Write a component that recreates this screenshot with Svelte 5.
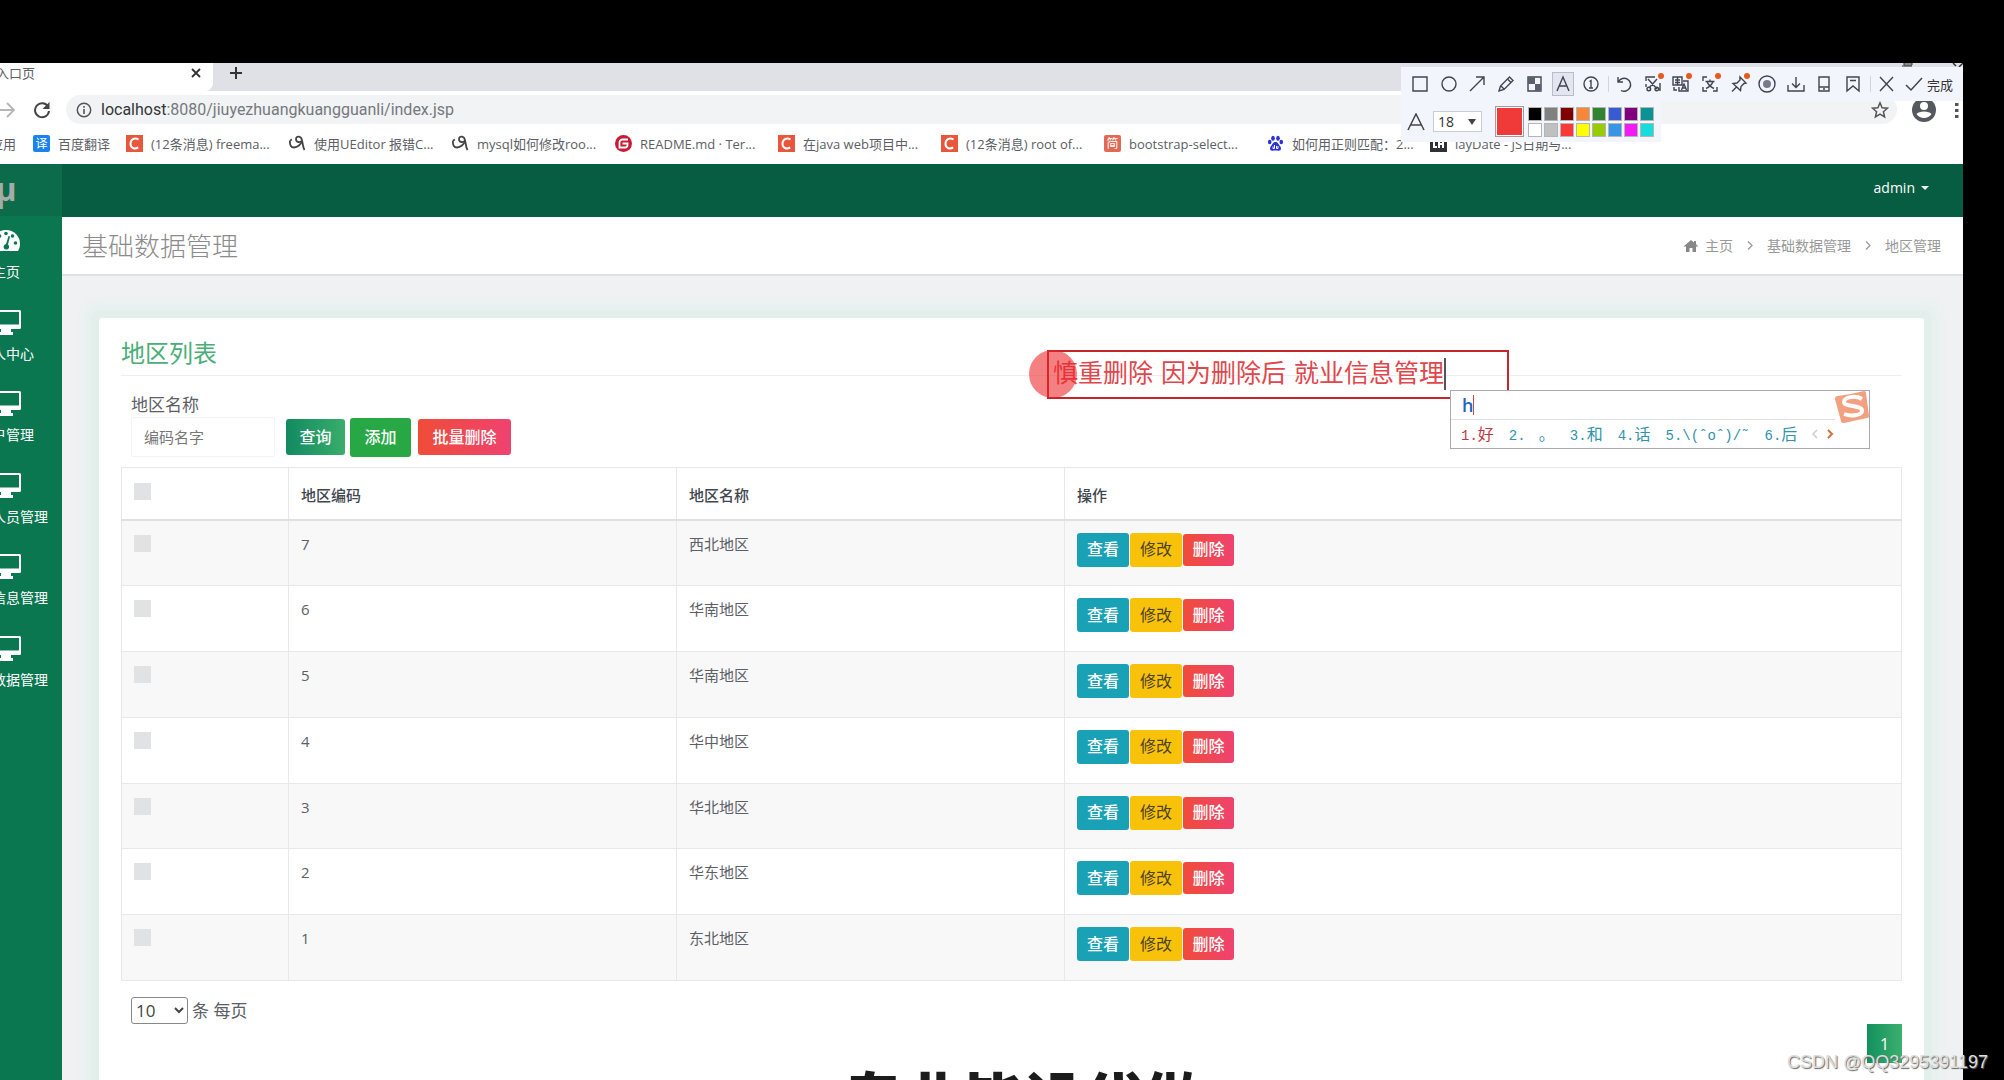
<script>
  const bookmarks = [
    { kind: 'c', label: '(12条消息) freema...' },
    { kind: 'swirl', label: '使用UEditor 报错C...' },
    { kind: 'swirl', label: 'mysql如何修改roo...' },
    { kind: 'g', label: 'README.md · Ter...' },
    { kind: 'c', label: '在java web项目中...' },
    { kind: 'c', label: '(12条消息) root of...' },
    { kind: 'jian', label: 'bootstrap-select...' },
    { kind: 'paw', label: '如何用正则匹配：2...' },
    { kind: 'lay', label: 'layDate - JS日期与...' }
  ];
  const menu = ['个人中心', '用户管理', '企业人员管理', '就业信息管理', '基础数据管理'];
  const rows = [
    [7, '西北地区'],
    [6, '华南地区'],
    [5, '华南地区'],
    [4, '华中地区'],
    [3, '华北地区'],
    [2, '华东地区'],
    [1, '东北地区']
  ];
  const drawTools = [
    { name: '矩形', d: 'M4 4h14v14H4z' },
    { name: '椭圆', d: 'M11 4a7 7 0 1 0 0 14a7 7 0 1 0 0-14z' },
    { name: '箭头', d: 'M4 18L18 4M10 4h8v8' },
    { name: '画笔', d: 'M4 18l1.5-5L14.500 4l3.500 3.500L9 16.500zM12.500 6l3.500 3.500M6 13l3 3' },
    { name: '马赛克', d: 'M5 4h13v14H5z', fill: 'M5 4h7v7H5zM12 11h6v7h-6z' },
    { name: '文字', d: 'M5 18L11 4l6 14M7 13h8', on: true },
    { name: '序号', d: 'M11 4a7 7 0 1 0 0 14a7 7 0 1 0 0-14zM9.500 8.500L11 7.500V15M9 15h4' }
  ];
  const actions = [
    { name: '撤销', d: 'M5 4v5h5M5.500 8.500A6.500 6.500 0 1 1 8 17.500' },
    { name: '裁剪', d: 'M4 8V4h9M18 10v8M4 14v-3M6 6l9 10M15 6L7 15M5 16a1.800 1.800 0 1 0 3.600 0a1.800 1.800 0 1 0-3.600 0M13 16a1.800 1.800 0 1 0 3.600 0a1.800 1.800 0 1 0-3.600 0', dot: true },
    { name: '翻译', d: 'M3 4h9v8H3zM5 7h5M5 9.500h5M7.500 4v8M13 8h5v10H9v-4M11.500 17l2.500-6 2.500 6M12.500 15h3M4 14v3h3', dot: true },
    { name: '文字识别', d: 'M4 8V4h4M4 14v4h4M14 18h4v-4M6.500 8.500h9M11 6.500v2M14 8.500c-1 3-3.500 5.500-7 7M8 8.500c1 3 3.500 5.500 7 7', dot: true },
    { name: '贴图', d: 'M12 4l6 6-2 .5-3 3-.5 4L5 10.500l4-.5 3-3zM9 13.500L4 18.500', dot: true },
    { name: '录制', d: 'M11 3a8 8 0 1 0 0 16a8 8 0 1 0 0-16z', fill: 'M11 7a4 4 0 1 0 0 8a4 4 0 1 0 0-8z' },
    { name: '保存', d: 'M11 4v10M7 10.500l4 4 4-4M3 12v6h16v-6' },
    { name: '手机', d: 'M6 4h10v14H6zM6 14h10M10 16h2' },
    { name: '收藏', d: 'M5 4h12v14l-6-5-6 5zM8 7.500h6' }
  ];
  const palette = [
    ['#000', '#808080', '#800000', '#f7883a', '#308430', '#385ad3', '#800080', '#099394'],
    ['#fff', '#c0c0c0', '#fb3838', '#ff0', '#99cc00', '#3894e4', '#f31bf3', '#16dcdc']
  ];
</script>

<div class="stage">
  <div class="browser">
    <header class="chrome">
      <div class="tabs">
        <div class="tab">
          <span>入口页</span>
          <button class="bare" aria-label="关闭标签页"><svg width="12" height="12" viewBox="0 0 12 12"><path d="M2 2l8 8M10 2l-8 8" stroke="#333" stroke-width="1.800" /></svg></button>
        </div>
        <button class="bare plus" aria-label="新标签页"><svg width="14" height="14" viewBox="0 0 14 14"><path d="M7 1v12M1 7h12" stroke="#333" stroke-width="2" /></svg></button>
        <div class="window-marks">
          <svg width="62" height="5" viewBox="0 0 62 5"><path d="M3 0h8v2H3zM1 3h10" stroke="#333" fill="none" /><path d="M52 0l3 3M62 0l-4 4" stroke="#333" stroke-width="1.500" /></svg>
        </div>
      </div>
      <div class="toolbar">
        <svg class="fwd" width="18" height="18" viewBox="0 0 18 18"><path d="M0 9h16M9 2l7 7-7 7" fill="none" stroke="#b4b6b9" stroke-width="1.800" /></svg>
        <button class="bare reload" aria-label="重新加载"><svg width="18" height="18" viewBox="0 0 18 18"><path d="M15 5.500A7 7 0 1 0 16 10" fill="none" stroke="#444" stroke-width="2" /><path d="M16.500 1v7h-7z" fill="#444" /></svg></button>
        <div class="omnibox">
          <svg width="16" height="16" viewBox="0 0 16 16"><circle cx="8" cy="8" r="6.700" fill="none" stroke="#555" stroke-width="1.500" /><path d="M8 7v5M8 4v1.800" stroke="#555" stroke-width="1.600" /></svg>
          <div class="url"><b>localhost</b>:8080/jiuyezhuangkuangguanli/index.jsp</div>
          <svg width="18" height="18" viewBox="0 0 18 18"><path d="M9 1.800l2.100 4.900 5.300.5-4 3.500 1.200 5.200L9 13.200l-4.600 2.700 1.200-5.200-4-3.500 5.300-.5z" fill="none" stroke="#555" stroke-width="1.500" /></svg>
        </div>
        <svg class="avatar" width="24" height="24" viewBox="0 0 24 24"><circle cx="12" cy="12" r="12" fill="#55585c" /><circle cx="12" cy="8" r="4" fill="#fff" /><path d="M4.500 16c2-3.500 13-3.500 15 0a9 9 0 0 1-15 0z" fill="#fff" /></svg>
        <svg width="6" height="18" viewBox="0 0 6 18"><path d="M1 2h3.500v3H1zM1 8h3.500v3H1zM1 14h3.500v3H1z" fill="#555" /></svg>
      </div>
      <nav class="bookmarks" aria-label="书签">
        <a class="apps" href="#apps">应用</a>
        <a class="fanyi" href="#fanyi"><span class="ico blue">译</span>百度翻译</a>
        {#each bookmarks as b}
          <a class="mark" href="#bookmark">
            {#if b.kind === 'c'}
              <svg width="17" height="17" viewBox="0 0 17 17"><path d="M0 0h17v17H0z" fill="#e8573b" /><path d="M12.500 4.500C8.500 2 4.500 4.500 4.500 8.800c0 4.200 4 5.700 7.700 3.700" fill="none" stroke="#fff" stroke-width="2" /></svg>
            {:else if b.kind === 'swirl'}
              <svg width="17" height="17" viewBox="0 0 17 17"><path d="M1 5.500c-.5 4.500 1 7 4 7 3.500 0 7-3 8-6.500" fill="none" stroke="#444" stroke-width="1.800" /><path d="M13 6.500C13 .5 7 .5 7 4s4 4 6 1.500c1 3 .5 6 2.500 9.500" fill="none" stroke="#444" stroke-width="1.800" /><path d="M1 5.500l2-1" stroke="#444" stroke-width="1.500" /></svg>
            {:else if b.kind === 'g'}
              <svg width="17" height="17" viewBox="0 0 17 17"><circle cx="8.500" cy="8.500" r="8.500" fill="#c71d33" /><path d="M13 4.500H7.500a3 3 0 0 0-3 3V12.500h5.500a2.500 2.500 0 0 0 2.500-2.500V8.500H7.500" fill="none" stroke="#fff" stroke-width="1.800" /></svg>
            {:else if b.kind === 'jian'}
              <span class="ico red">简</span>
            {:else if b.kind === 'paw'}
              <svg width="17" height="17" viewBox="0 0 17 17" fill="#2a32d8"><ellipse cx="6" cy="3.300" rx="1.800" ry="2.500" /><ellipse cx="11" cy="3.300" rx="1.800" ry="2.500" /><ellipse cx="2.700" cy="7" rx="1.800" ry="2.200" /><ellipse cx="14.300" cy="7" rx="1.800" ry="2.200" /><path d="M8.500 7c2.500 0 3 2.500 4.500 4s1.500 5-1.500 4.700c-2-.3-4-.3-6 0C2.500 16 2.500 12.500 4 11s2-4 4.500-4z" /><path d="M7.500 10v3.500H6v-2M9.500 11v2.500H11V11" fill="none" stroke="#fff" /></svg>
            {:else}
              <svg width="17" height="17" viewBox="0 0 17 17"><path d="M0 0h17v17H0z" fill="#2e3238" /><path d="M4 3v9h3M9 6v7M13 6v7M9 9h4" fill="none" stroke="#fff" stroke-width="2" /></svg>
            {/if}
            <span>{b.label}</span>
          </a>
        {/each}
      </nav>
    </header>

    <div class="app">
      <aside class="side">
        <div class="logo">µ</div>
        <nav class="menu" aria-label="主菜单">
          <a href="#home">
            <svg width="30" height="26" viewBox="0 0 30 26"><path d="M1 17a14 14 0 0 1 28 0c0 3-1 5-2 7H3c-1-2-2-4-2-7z" fill="#fff" /><g fill="#0b7750"><circle cx="5.500" cy="16" r="1.800" /><circle cx="8.500" cy="9" r="1.800" /><circle cx="15" cy="6.500" r="1.800" /><circle cx="21.500" cy="9" r="1.800" /><circle cx="24.500" cy="16" r="1.800" /><path d="M17.500 9l1.500.5-2 8a2.800 2.800 0 1 1-2-.5z" /></g></svg>
            主页
          </a>
          {#each menu as m}
            <a href="#menu">
              <svg width="30" height="26" viewBox="0 0 30 26"><path d="M1.500 1h27q1.500 0 1.500 1.500v16q0 1.500-1.500 1.500H20v3h2v3H8v-3h2v-3H1.500Q0 20 0 18.500v-16Q0 1 1.500 1zM2 3v12.500h26V3z" fill="#fff" fill-rule="evenodd" /></svg>
              {m}
            </a>
          {/each}
        </nav>
      </aside>

      <div class="main">
        <div class="navbar"><button class="bare admin">admin<i></i></button></div>
        <div class="heading">
          <h1>基础数据管理</h1>
          <nav class="crumbs" aria-label="面包屑">
            <a href="#home"><svg width="14" height="12" viewBox="0 0 14 12"><path d="M7 0l3 2.600V1h2v3.300L14 6l-.8 1L12 6v6H8.500V8h-3v4H2V6L.8 7 0 6z" fill="#888" /></svg>主页</a>
            <svg width="6" height="9" viewBox="0 0 6 9"><path d="M1 .5l4 4-4 4" fill="none" stroke="#999" stroke-width="1.300" /></svg>
            <a href="#data">基础数据管理</a>
            <svg width="6" height="9" viewBox="0 0 6 9"><path d="M1 .5l4 4-4 4" fill="none" stroke="#999" stroke-width="1.300" /></svg>
            <span>地区管理</span>
          </nav>
        </div>
        <div class="content">
          <section class="card">
            <h2>地区列表</h2>
            <div class="filter">
              <label for="area">地区名称</label>
              <div class="controls">
                <input id="area" type="text" placeholder="编码名字" />
                <button class="btn query">查询</button>
                <button class="btn add">添加</button>
                <button class="btn danger">批量删除</button>
              </div>
            </div>
            <table>
              <thead>
                <tr>
                  <th class="pick"><input type="checkbox" aria-label="全选" /></th>
                  <th class="col">地区编码</th>
                  <th class="col">地区名称</th>
                  <th>操作</th>
                </tr>
              </thead>
              <tbody>
                {#each rows as [code, name]}
                  <tr>
                    <td><input type="checkbox" aria-label={`选择 ${code}`} /></td>
                    <td>{code}</td>
                    <td>{name}</td>
                    <td>
                      <div class="ops">
                        <button class="btn view">查看</button>
                        <button class="btn edit">修改</button>
                        <button class="btn danger">删除</button>
                      </div>
                    </td>
                  </tr>
                {/each}
              </tbody>
            </table>
            <div class="pager-size">
              <select id="size"><option>10</option><option>25</option></select>
              <label for="size">条 每页</label>
            </div>
            <div class="pager"><button class="page">1</button></div>
          </section>
        </div>
      </div>
    </div>
  </div>

  <div class="capture">
    <div class="cap-row">
      <div class="group draw">
        {#each drawTools as t}
          <button class="tool" class:on={t.on} aria-label={t.name}><svg width="22" height="22" viewBox="0 0 22 22"><path d={t.d} fill="none" stroke="#3f4450" stroke-width="1.400" />{#if t.fill}<path d={t.fill} fill="#5b606d" />{/if}</svg></button>
        {/each}
      </div>
      <i class="sep"></i>
      <div class="group act">
        {#each actions as t}
          <button class="tool" aria-label={t.name}><svg width="22" height="22" viewBox="0 0 22 22"><path d={t.d} fill="none" stroke="#3f4450" stroke-width="1.400" />{#if t.fill}<path d={t.fill} fill="#777b88" />{/if}{#if t.dot}<circle cx="19" cy="3" r="3" fill="#e65a1e" />{/if}</svg></button>
        {/each}
      </div>
      <i class="sep"></i>
      <button class="tool end" aria-label="取消"><svg width="22" height="22" viewBox="0 0 22 22"><path d="M5 4l13 14M18 4L5 18" stroke="#3f4450" stroke-width="1.400" /></svg></button>
      <button class="tool done"><svg width="18" height="22" viewBox="0 0 18 22"><path d="M1 12l5 5L17 5" fill="none" stroke="#3f4450" stroke-width="1.500" /></svg>完成</button>
    </div>
    <div class="cap-style">
      <svg width="18" height="18" viewBox="0 0 18 18"><path d="M1 17L9 1l8 16M4 12h10" fill="none" stroke="#444" stroke-width="1.500" /></svg>
      <div class="sizebox">
        <select class="fontsize" aria-label="字号"><option>18</option><option>24</option></select>
        <i></i>
      </div>
      <div class="current"></div>
      <div class="palette">
        {#each palette as line}
          {#each line as c}
            <button aria-label={`颜色 ${c}`} style:background={c}></button>
          {/each}
        {/each}
      </div>
    </div>
  </div>

  <div class="note">慎重删除 因为删除后 就业信息管理<i></i></div>
  <div class="pointer"></div>

  <div class="ime">
    <div class="typed">h<i></i></div>
    <div class="cands">
      <span class="first"><b>1.</b>好</span>
      <span class="wide"><b>2.</b>。</span>
      <span><b>3.</b>和</span>
      <span><b>4.</b>话</span>
      <span><b>5.\(ˆoˆ)/˜</b></span>
      <span><b>6.</b>后</span>
      <svg width="22" height="12" viewBox="0 0 22 12"><path d="M5 2L1 6l4 4" fill="none" stroke="#ccc" stroke-width="1.500" /><path d="M16 2l4 4-4 4" fill="none" stroke="#d8703c" stroke-width="2" /></svg>
    </div>
    <svg class="sogou" width="34" height="32" viewBox="0 0 34 32"><path d="M3 5Q17 3 29 0q2 0 2 2l3 23q0 2-2 2L9 32q-3 0-3-2L0 8q0-3 3-3z" fill="#f2a07f" /><path d="M27 8C20 4 9 6 9 11s17 3 18 8-10 7-18 4" fill="none" stroke="#fff" stroke-width="4" /></svg>
  </div>

  <div class="caption">专业毕设代做</div>
  <div class="watermark">CSDN @QQ3295391197</div>
</div>

<style>
  :global(body) { margin: 0; background: #000; }
  .stage {
    position: relative;
    height: 100vh;
    overflow: hidden;
    box-sizing: border-box;
    padding: 63px 41px 0 0;
    background: #000;
    font-family: "Open Sans", "Noto Sans CJK SC", sans-serif;
    color: #5c6066;
  }
  .stage * { box-sizing: border-box; }
  a { color: inherit; text-decoration: none; }
  svg { flex: none; display: block; }
  button, input, select { font-family: inherit; margin: 0; }
  .bare { border: 0; background: none; padding: 0; display: flex; align-items: center; }
  .browser { height: 100%; display: flex; flex-direction: column; overflow: hidden; background: #fff; }

  .chrome { flex: none; height: 101px; font-size: 13px; overflow: hidden; }
  .tabs { display: flex; height: 28px; background: #dfe1e6; align-items: center; }
  .tab { width: 213px; height: 28px; background: #fff; border-radius: 0 0 8px 0; display: flex; align-items: center; justify-content: space-between; padding: 0 11px 8px 0; line-height: 20px; }
  .tab span { margin-left: -4px; }
  .plus { margin: 0 0 8px 16px; }
  .window-marks { margin-left: auto; align-self: flex-start; }
  .toolbar { display: flex; align-items: center; height: 37px; padding: 0 3px 0 0; }
  .fwd { margin-left: -2px; }
  .reload { margin: 0 15px 0 17px; }
  .omnibox { flex: 1; height: 29px; border-radius: 15px; background: #f1f3f4; display: flex; align-items: center; gap: 9px; padding: 0 8px 0 10px; }
  .url { flex: 1; font-family: Roboto, "Noto Sans CJK SC", sans-serif; font-size: 16px; color: #75797e; line-height: 28px; }
  .url b { font-weight: 400; color: #33363a; }
  .avatar { margin: 0 18px 0 15px; }
  .bookmarks { display: flex; align-items: center; height: 34px; line-height: 20px; white-space: nowrap; padding-bottom: 3px; }
  .apps { margin-left: -10px; width: 43px; }
  .fanyi { width: 93px; display: flex; align-items: center; gap: 8px; }
  .ico { width: 17px; height: 17px; line-height: 17px; font-size: 12px; text-align: center; color: #fff; border-radius: 2px; flex: none; }
  .blue { background: #1b83f0; }
  .red { background: #e06a55; }
  .mark { width: 163px; flex: none; display: flex; align-items: center; gap: 8px; }

  .app { flex: 1; min-height: 0; display: flex; }
  .side { flex: none; width: 112px; margin-left: -50px; background: #0b7750; color: #fff; }
  .logo { height: 52px; background: #0b6b4a; text-align: center; font-size: 32px; line-height: 50px; font-weight: 700; color: #a3aca6; }
  .menu { height: 491px; display: grid; grid-auto-rows: 1fr; padding-top: 2px; font-size: 14px; line-height: 20px; }
  .menu a { display: flex; flex-direction: column; align-items: center; gap: 9px; padding-top: 9px; white-space: nowrap; }

  .main { flex: 1; min-width: 0; display: flex; flex-direction: column; }
  .navbar { flex: none; height: 53px; background: #065d41; display: flex; justify-content: flex-end; padding: 0 34px 6px 0; }
  .admin { color: #fff; font-size: 14px; gap: 6px; }
  .admin i { border: 4px solid transparent; border-top-color: #fff; border-bottom: 0; }
  .heading { flex: none; height: 59px; background: #fff; border-bottom: 2px solid #dfe2e5; display: flex; align-items: center; justify-content: space-between; padding: 0 22px 0 20px; }
  h1 { margin: 0; font-size: 26px; font-weight: 300; color: #8c8c8c; line-height: 36px; }
  .crumbs { display: flex; align-items: center; gap: 14px; font-size: 14px; color: #999; line-height: 20px; }
  .crumbs a { display: flex; align-items: center; gap: 7px; }
  .content { flex: 1; min-height: 0; background: #eff1f3; padding: 42px 39px 0 37px; }
  .card { background: #fff; min-height: 100%; border-radius: 3px; box-shadow: 0 0 0 8px #e2efeb, 0 0 8px 14px #e6f1ee; padding: 15px 22px 60px; }
  h2 { margin: 0; height: 43px; border-bottom: 1px solid #eee; font-size: 24px; font-weight: 400; line-height: 40px; color: #4aae78; }
  .filter { padding: 17px 10px 10px; font-size: 17px; line-height: 24px; color: #5c6066; }
  .filter label { display: block; }
  .controls { display: flex; align-items: center; height: 40px; }
  .controls input { width: 144px; height: 40px; border: 1px solid #f2f3f4; border-radius: 2px; padding: 0 12px; font-size: 15px; margin-right: 11px; background: #fff; }
  .controls input::placeholder { color: #777; opacity: 1; }
  .btn { border: 0; border-radius: 3px; color: #fff; font-size: 16px; font-weight: 500; line-height: 24px; padding: 0 0 1px; white-space: nowrap; }
  .query { width: 59px; height: 36px; background: linear-gradient(90deg, #128a61, #38ad6c); }
  .add { width: 61px; height: 39px; margin: 0 7px 0 5px; background: #28a745; }
  .danger { background: linear-gradient(90deg, #f04c38, #ef4270); }
  .controls .danger { width: 93px; height: 36px; }

  table { width: 100%; height: 514px; border-collapse: collapse; table-layout: fixed; font-size: 15px; line-height: 22px; }
  th, td { border: 1px solid #e6e8ea; text-align: left; vertical-align: top; padding: 12px 12px 0 12px; }
  th { height: 52px; padding-top: 16px; font-weight: 500; color: #40464d; border-bottom: 2px solid #dee0e2; }
  .pick { width: 167px; }
  .col { width: 388px; }
  tbody tr:nth-child(odd) { background: #f8f8f9; }
  input[type="checkbox"] { appearance: none; display: block; width: 17px; height: 17px; background: #e1e2e4; margin: 2px 0 0; }
  th input[type="checkbox"] { margin-top: -1px; }
  .ops { display: flex; align-items: center; gap: 1px; }
  .ops .btn { width: 52px; height: 34px; }
  .ops .danger { width: 51px; height: 32px; }
  .view { background: #19a2b6; }
  .edit { background: #f9c20a; color: #4d4320; font-weight: 400; }
  .pager-size { display: flex; align-items: center; gap: 4px; padding: 16px 10px 0; font-size: 17px; line-height: 27px; }
  .pager-size select { width: 57px; height: 27px; font-size: 17px; padding: 0; color: #444; background: #fff; border: 1px solid #888; border-radius: 3px; }
  .pager { display: flex; justify-content: flex-end; }
  .page { width: 35px; height: 39px; border: 0; padding: 0; color: #fff; font-size: 16px; background: linear-gradient(90deg, #12905f, #3cb06d); }

  .capture { position: absolute; right: 41px; top: 67px; width: 562px; }
  .cap-row { display: flex; align-items: center; height: 34px; background: #f3f5fd; padding-left: 5px; }
  .group { display: flex; flex: none; }
  .draw { width: 199px; }
  .act { width: 257px; }
  .tool { flex: 1; height: 24px; padding: 0; border: 0; background: none; display: flex; align-items: center; justify-content: center; }
  .tool.on { background: #e3e6ee; box-shadow: inset 0 0 0 1px #b9bdc9; margin: 0 3px; flex: 0 0 22px; }
  .end { flex: 0 0 28px; }
  .done { flex: 1; gap: 4px; font-size: 13px; color: #333; white-space: nowrap; justify-content: flex-start; padding-left: 5px; }
  .sep { flex: none; width: 1px; height: 16px; background: #d2d5dd; margin: 0 1px 0 3px; }
  .cap-style { display: flex; align-items: center; width: 260px; height: 41px; padding-left: 6px; background: #f3f5fd; }
  .sizebox { position: relative; margin: 0 13px 0 8px; }
  .sizebox i { position: absolute; right: 6px; top: 8px; border: 4px solid transparent; border-top: 6px solid #444; border-bottom: 0; pointer-events: none; }
  .fontsize { display: block; appearance: none; width: 49px; height: 21px; border: 1px solid #c9ccd3; border-radius: 0; background: #fff; font-size: 14px; line-height: 18px; padding: 0 0 0 4px; color: #333; }
  .current { width: 29px; height: 31px; background: #f03a3a; border: 1px solid #a99; box-shadow: inset 0 0 0 1px #fff; }
  .palette { margin-left: 4px; display: grid; grid-template-columns: repeat(8, 14px); grid-auto-rows: 14px; gap: 2px; }
  .palette button { border: 1px solid #b5b5b5; padding: 0; }

  .note { position: absolute; left: 1047px; top: 350px; width: 462px; height: 49px; border: 2px solid #c4262b; padding: 0 0 2px 4px; font-family: "DejaVu Sans", "Noto Sans CJK SC", sans-serif; font-size: 25px; line-height: 44px; color: #e0474c; white-space: nowrap; display: flex; align-items: center; }
  .note i { width: 2px; height: 32px; background: #555; }
  .pointer { position: absolute; left: 1029px; top: 350px; width: 48px; height: 48px; border-radius: 50%; background: rgba(237, 36, 40, 0.58); }
  .ime { position: absolute; left: 1450px; top: 390px; width: 420px; height: 59px; background: #fff; border: 1px solid #a8abae; font-size: 16px; }
  .typed { height: 29px; margin-right: 34px; padding-left: 11px; border-bottom: 1px solid #dde0e2; display: flex; align-items: center; color: #1d68b8; font-size: 18px; font-weight: 600; line-height: 28px; }
  .typed i { width: 1px; height: 20px; background: #c0504d; }
  .cands { display: flex; align-items: center; height: 27px; gap: 15px; padding-left: 10px; color: #2f93ab; line-height: 24px; white-space: nowrap; }
  .cands b { font: 400 14px "Liberation Mono", monospace; }
  .cands .first { color: #c0393d; }
  .cands .wide { width: 46px; display: flex; justify-content: space-between; align-items: baseline; }
  .sogou { position: absolute; right: 0; top: 0; }
  .caption { position: absolute; left: 843px; bottom: -56px; font-size: 60px; font-weight: 900; line-height: 72px; color: #1c1c1c; white-space: nowrap; }
  .watermark { position: absolute; right: 16px; bottom: 7px; font: 18px/22px "Liberation Sans", sans-serif; color: #ddd; text-shadow: 1px 1px 1px #666; white-space: nowrap; }
</style>
